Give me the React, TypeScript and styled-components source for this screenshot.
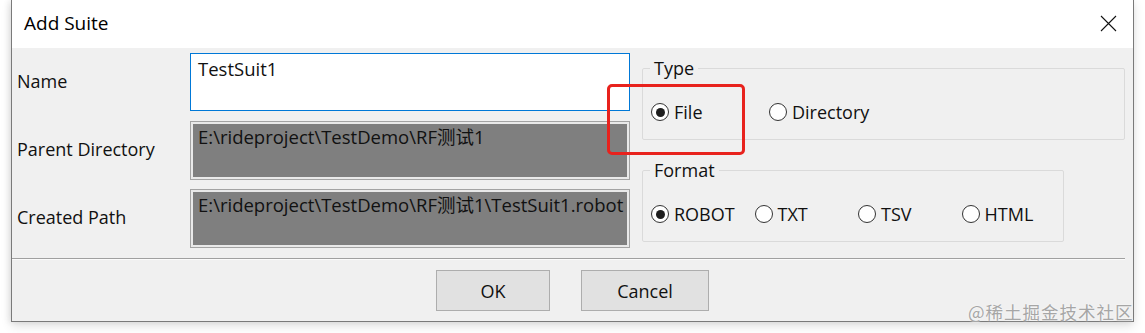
import styled, { createGlobalStyle } from 'styled-components';

const GlobalStyle = createGlobalStyle`
  html, body {
    margin: 0;
    padding: 0;
    background: #ffffff;
  }
  body {
    font-family: 'Open Sans', 'Noto Sans', 'Noto Sans CJK SC', sans-serif;
    color: #111;
  }
`;

const FONT = `'Open Sans', 'Noto Sans', 'Noto Sans CJK SC', sans-serif`;

const Page = styled.div`
  position: relative;
  width: 1145px;
  height: 333px;
  padding-left: 11px;
  box-sizing: border-box;
  overflow: hidden;
`;

const Dialog = styled.div`
  width: 1123px;
  height: 322px;
  box-sizing: border-box;
  border: 1px solid #7a7a7a;
  border-top: none;
  background: #f0f0f0;
  display: flex;
  flex-direction: column;
  box-shadow: 0 4px 10px rgba(0, 0, 0, 0.12), -2px 0 6px rgba(0, 0, 0, 0.08);
`;

const TitleBar = styled.div`
  height: 46px;
  flex: none;
  background: #ffffff;
  display: flex;
  align-items: center;
  justify-content: space-between;
  padding: 0 16px 2px 12px;
`;

const Title = styled.span`
  font-family: ${FONT};
  font-size: 19px;
  color: #000;
`;

const CloseIcon = () => (
  <svg width="17" height="17" viewBox="0 0 17 17">
    <path d="M1 1 L16 16 M16 1 L1 16" stroke="#111" strokeWidth="1.1" fill="none" />
  </svg>
);

const Body = styled.div`
  flex: 1;
  display: flex;
  gap: 12px;
`;

const Form = styled.div`
  display: grid;
  grid-template-columns: 173px 440px;
  grid-template-rows: 58px 59px 59px;
  row-gap: 9.5px;
  padding: 5px 0 0 5px;
  align-items: center;
`;

const Label = styled.span`
  font-family: ${FONT};
  font-size: 18px;
  color: #111;
  margin-top: -3px;
`;

const Field = styled.div<{ readOnly?: boolean }>`
  height: 100%;
  box-sizing: border-box;
  padding: 3px 7px;
  font-family: ${FONT};
  font-size: 18.5px;
  line-height: 24px;
  white-space: nowrap;
  overflow: hidden;
  color: #111;
  border: 1px solid ${(p) => (p.readOnly ? '#a3a3a3' : '#0078d7')};
  background: ${(p) => (p.readOnly ? '#7f7f7f' : '#ffffff')};
  box-shadow: ${(p) => (p.readOnly ? 'inset 0 0 0 2px #e9e9e9' : 'none')};
`;

const Side = styled.div`
  display: flex;
  flex-direction: column;
  align-items: flex-start;
`;

const Group = styled.fieldset<{ w: number; mt: number; pt: number; pb: number }>`
  width: ${(p) => p.w}px;
  box-sizing: border-box;
  margin: ${(p) => p.mt}px 0 0 0;
  padding: ${(p) => p.pt}px 8px ${(p) => p.pb}px 8px;
  border: 1px solid #dadada;
  border-radius: 2px;
  min-inline-size: 0;
`;

const Legend = styled.legend`
  font-family: ${FONT};
  font-size: 18px;
  line-height: 20px;
  padding: 0 4px;
  margin-left: -1px;
  color: #111;
`;

const RadioRow = styled.div<{ col: number }>`
  display: grid;
  grid-template-columns: repeat(4, ${(p) => p.col}px);
  height: 20px;
  align-items: center;
`;

const RadioItem = styled.label`
  display: flex;
  align-items: center;
  gap: 5px;
  font-family: ${FONT};
  font-size: 18px;
  color: #111;
  white-space: nowrap;
`;

const Circle = styled.span<{ checked?: boolean }>`
  width: 18px;
  height: 18px;
  box-sizing: border-box;
  border-radius: 50%;
  border: 1.5px solid #333;
  background: #fff;
  display: flex;
  align-items: center;
  justify-content: center;
  flex: none;

  &::after {
    content: '';
    width: 9px;
    height: 9px;
    border-radius: 50%;
    background: ${(p) => (p.checked ? '#1e1e1e' : 'transparent')};
  }
`;

const Separator = styled.div`
  height: 1px;
  background: #a0a0a0;
  border-bottom: 1px solid #fbfbfb;
  margin: 0 8px 0 0;
  flex: none;
`;

const Buttons = styled.div`
  height: 61px;
  flex: none;
  display: flex;
  justify-content: center;
  align-items: flex-start;
  padding-top: 10px;
  box-sizing: border-box;
  gap: 31px;
`;

const Button = styled.button<{ w: number }>`
  width: ${(p) => p.w}px;
  height: 41px;
  background: #e1e1e1;
  border: 1px solid #adadad;
  font-family: ${FONT};
  font-size: 18px;
  color: #111;
  padding: 0;
`;

const Highlight = styled.div`
  position: absolute;
  left: 607px;
  top: 84px;
  width: 138px;
  height: 71px;
  box-sizing: border-box;
  border: 3px solid #e8221d;
  border-radius: 5px;
`;

const Watermark = styled.span`
  position: absolute;
  left: 968px;
  top: 299px;
  font-family: 'Noto Sans CJK SC', sans-serif;
  font-size: 17.5px;
  letter-spacing: 1px;
  color: #a6a6a6;
  text-shadow: 0 0 2px #fff;
`;

const Radio = ({ label, checked }: { label: string; checked?: boolean }) => (
  <RadioItem>
    <Circle checked={checked} />
    {label}
  </RadioItem>
);

export default function App() {
  return (
    <>
      <GlobalStyle />
      <Page>
        <Dialog>
          <TitleBar>
            <Title>Add Suite</Title>
            <CloseIcon />
          </TitleBar>
          <Body>
            <Form>
              <Label>Name</Label>
              <Field>TestSuit1</Field>
              <Label>Parent Directory</Label>
              <Field readOnly>E:\rideproject\TestDemo\RF测试1</Field>
              <Label>Created Path</Label>
              <Field readOnly>E:\rideproject\TestDemo\RF测试1\TestSuit1.robot</Field>
            </Form>
            <Side>
              <Group w={483} mt={10} pt={22} pb={19}>
                <Legend>Type</Legend>
                <RadioRow col={118}>
                  <Radio label="File" checked />
                  <Radio label="Directory" />
                </RadioRow>
              </Group>
              <Group w={422} mt={20} pt={22} pb={19}>
                <Legend>Format</Legend>
                <RadioRow col={103.5}>
                  <Radio label="ROBOT" checked />
                  <Radio label="TXT" />
                  <Radio label="TSV" />
                  <Radio label="HTML" />
                </RadioRow>
              </Group>
            </Side>
          </Body>
          <Separator />
          <Buttons>
            <Button w={114}>OK</Button>
            <Button w={128}>Cancel</Button>
          </Buttons>
        </Dialog>
        <Highlight />
        <Watermark>@稀土掘金技术社区</Watermark>
      </Page>
    </>
  );
}
